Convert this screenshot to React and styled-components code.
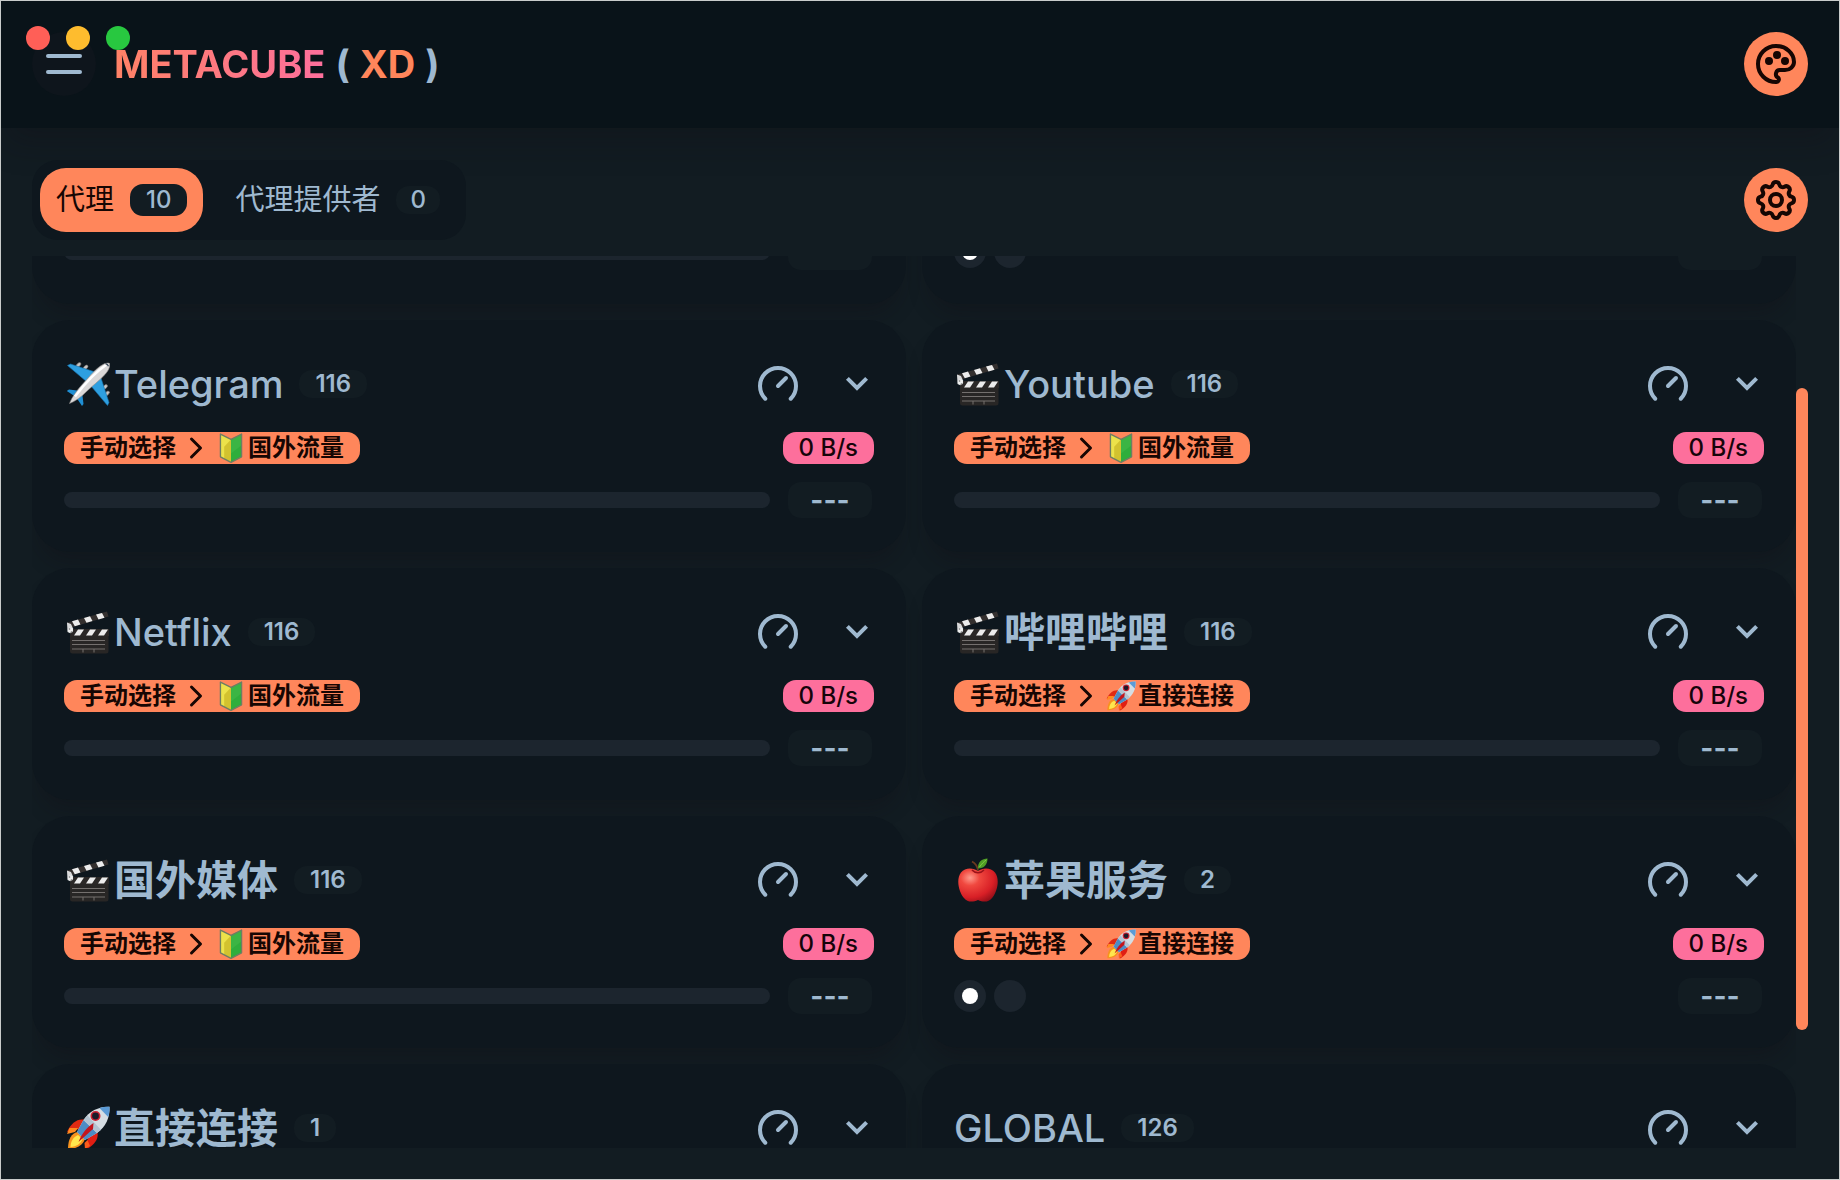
import React, { useLayoutEffect, useRef, useState } from "react";
import styled, { createGlobalStyle, css } from "styled-components";
import {
  TbBrandSpeedtest,
  TbChevronRight,
  TbMenu,
  TbPalette,
  TbSettings,
} from "react-icons/tb";

const base100 = "#121c22";
const base200 = "#0e171e";
const base300 = "#091319";
const neutral = "#1c252e";
const content = "#9fb9d0";
const primary = "#ff865b";
const primaryContent = "#160603";
const secondary = "#fd6f9c";

const GlobalStyle = createGlobalStyle`
  *, *::before, *::after { box-sizing: border-box; }
  body {
    margin: 0;
    background: ${base100};
    color: ${content};
    font-family: Inter, "Noto Sans CJK SC", sans-serif;
  }
  button {
    font: inherit;
    color: inherit;
    border: 0;
    padding: 0;
    cursor: pointer;
  }
  h2 { margin: 0; }
`;

const Window = styled.div`
  display: flex;
  flex-direction: column;
  height: 100vh;
  overflow: hidden;
  outline: 1px solid #c9cccb;
  outline-offset: -1px;
`;

const WindowControls = styled.div`
  position: absolute;
  top: 26px;
  left: 26px;
  display: flex;
  gap: 16px;
`;

const WindowControl = styled.button`
  width: 24px;
  height: 24px;
  border-radius: 50%;
  background: ${(p) => p.$color};
`;

const Header = styled.header`
  display: flex;
  align-items: center;
  gap: 18px;
  padding: 32px;
  background: ${base300};
  box-shadow: 0 20px 30px -6px rgba(16, 14, 20, 0.3);
`;

const RoundButton = styled.button`
  display: grid;
  place-items: center;
  flex: none;
  width: 64px;
  height: 64px;
  border-radius: 50%;
  background: ${(p) => (p.$primary ? primary : "#0e151c")};
  color: ${(p) => (p.$primary ? primaryContent : content)};
`;

const Brand = styled.div`
  display: flex;
  flex: 1;
  gap: 10px;
  font-size: 38px;
  line-height: 56px;
  font-weight: 700;
`;

const BrandLink = styled.a`
  color: transparent;
  background: linear-gradient(to right, #ff865b -20%, #fd6f9c);
  background-clip: text;
  -webkit-background-clip: text;
  text-decoration: none;
`;

const BrandSuffix = styled.span`
  color: ${primary};
`;

const Main = styled.main`
  display: flex;
  flex: 1;
  flex-direction: column;
  gap: 16px;
  min-height: 0;
  padding: 32px;
`;

const Toolbar = styled.div`
  display: flex;
  align-items: center;
  justify-content: space-between;
`;

const Tabs = styled.div`
  display: flex;
  gap: 8px;
  padding: 8px;
  border-radius: 26px;
  background: ${base200};
`;

const Tab = styled.button`
  display: flex;
  align-items: center;
  gap: 16px;
  height: 64px;
  padding: ${(p) => (p.$active ? "0 16px" : "0 18px 0 24px")};
  border-radius: 26px;
  font-size: 29px;
  line-height: 44px;
  background: ${(p) => (p.$active ? primary : "transparent")};
  color: ${(p) => (p.$active ? primaryContent : content)};
`;

const Badge = styled.span`
  display: inline-flex;
  align-items: center;
  justify-content: center;
  flex: none;
  height: 28px;
  padding: 0 14px;
  border-radius: 13px;
  font-size: 24px;
  line-height: 28px;
  font-weight: 500;
  background: ${base100};
  color: ${content};
  ${(p) =>
    p.$tall &&
    css`
      height: 32px;
      padding: 0 16px;
    `}
  ${(p) =>
    p.$tone === "primary" &&
    css`
      gap: 2px;
      font-weight: 600;
      background: ${primary};
      color: ${primaryContent};
    `}
  ${(p) =>
    p.$tone === "secondary" &&
    css`
      background: ${secondary};
      color: #16040a;
    `}
`;

const CountBadge = styled(Badge)`
  padding: 0 16px;
  font-weight: 600;
`;

const Latency = styled(Badge)`
  width: 84px;
  height: 36px;
  font-size: 28px;
  font-weight: 700;
`;

const ScrollArea = styled.div`
  display: flex;
  flex: 1;
  min-height: 0;
`;

const Viewport = styled.div`
  flex: 1;
  min-width: 0;
  overflow-y: auto;
  scrollbar-width: none;
`;

const Track = styled.div`
  flex: none;
  width: 12px;
`;

const Thumb = styled.div`
  border-radius: 6px;
  background: ${primary};
`;

const Grid = styled.div`
  display: grid;
  grid-template-columns: 1fr 1fr;
  gap: 16px;
  padding-bottom: 16px;
`;

const Card = styled.section`
  display: flex;
  flex-direction: column;
  gap: 16px;
  padding: 32px;
  border-radius: 38px;
  background: ${base200};
  box-shadow: 0 16px 20px -6px rgba(16, 14, 20, 0.3);
`;

const Row = styled.div`
  display: flex;
  align-items: center;
  justify-content: space-between;
  min-height: 32px;
`;

const CardHead = styled(Row)`
  height: 64px;
`;

const CardTitle = styled.div`
  display: flex;
  align-items: center;
  gap: 16px;
`;

const Name = styled.h2`
  display: flex;
  align-items: center;
  font-size: ${(p) => (p.$latin ? 38 : 41)}px;
  line-height: 60px;
  font-weight: ${(p) => (p.$latin ? 500 : 600)};
`;

const Emoji = styled.svg`
  flex: none;
  margin: 0 4px 0 2px;
`;

const SmallEmoji = styled(Emoji)`
  margin: 0;
`;

const Actions = styled.div`
  display: flex;
  align-items: center;
  gap: 30px;
`;

const TestButton = styled.button`
  display: grid;
  place-items: center;
  width: 64px;
  height: 64px;
  background: none;
`;

const ToggleButton = styled(TestButton)`
  width: 34px;
`;

const CardFoot = styled(Row)`
  gap: 18px;
  height: 40px;
  padding-right: 2px;
`;

const Bar = styled.div`
  flex: 1;
  height: 16px;
  border-radius: 8px;
  background: ${neutral};
`;

const Nodes = styled.div`
  display: flex;
  flex: 1;
  gap: 8px;
`;

const Node = styled.button`
  display: grid;
  place-items: center;
  width: 32px;
  height: 32px;
  border-radius: 50%;
  background: ${neutral};
  &::before {
    content: "";
    width: 16px;
    height: 16px;
    border-radius: 50%;
    background: ${(p) => (p.$selected ? "#fff" : "transparent")};
  }
`;

const Airplane = () => (
  <g>
    <g fill="#c9c6c4" stroke="#77706e" strokeWidth=".6">
      <ellipse cx="12.5" cy="3" rx="3" ry="1.6" transform="rotate(-45 12.5 3)" />
      <ellipse cx="19.5" cy="5.5" rx="3" ry="1.6" transform="rotate(-45 19.5 5.5)" />
      <ellipse cx="41" cy="31.5" rx="3" ry="1.6" transform="rotate(-45 41 31.5)" />
      <ellipse cx="39" cy="25" rx="3" ry="1.6" transform="rotate(-45 39 25)" />
    </g>
    <path d="M1.500 3.500 4.500 2 29 10 21 20Z" fill="#2e9fe0" stroke="#1672ac" strokeWidth=".6" />
    <path d="M41.500 43.500 43 40.500 35 16 25 24Z" fill="#2e9fe0" stroke="#1672ac" strokeWidth=".6" />
    <path d="M.8 29 3 27.500 15 29 10 35Z" fill="#1f8fd4" />
    <path d="M16 44 17.500 42 16 30 10 35Z" fill="#1f8fd4" />
    <path d="M3.500 41.500C6 35 11 28 18 20.500 24 14 30 6 37 2.500 40 .8 44 .6 43.800 2 44 6 42 9 39 12.500 33 19 26 24 20 30 15 35 9 39.500 3.500 41.500Z" fill="#dad8d8" stroke="#8d8988" strokeWidth=".6" />
    <path d="M9 34.500C17 24 28 11 40 3" stroke="#fff" strokeWidth="2.500" fill="none" />
    <path d="M39.500 1.700c1.400.4 2.400 1.200 3 2.600" stroke="#345" strokeWidth="1.200" fill="none" />
  </g>
);

const Clapper = () => (
  <g>
    <path d="M1.500 12.500 41 1.500 42.500 6.500 5 17.500Z" fill="#34302f" />
    <path d="m6 11.300 6-1.700 2.500 5-5.700 1.700ZM18 8l6-1.700 2.500 4.800-6 1.700ZM30 4.600l6-1.700 2.500 4.800-6 1.800Z" fill="#ececec" />
    <path d="M1 12.500 5 14l3.500 7.500L6 24 1.500 22Z" fill="#d9dadb" />
    <path d="M5 19H43v7H4Z" fill="#2b2827" />
    <path d="m12 19.500h6l-4 6H8ZM24 19.500h6l-4 6h-6ZM36 19.500h6l-4 6h-6Z" fill="#ececec" />
    <path d="M4 26H42.500V41a2.500 2.500 0 0 1-2.500 2.500H6.500A2.500 2.500 0 0 1 4 41Z" fill="#282625" />
    <path d="M6 30.500H39M6 34.500H39M6 39H39M17 39v3.500M28 39v3.500" stroke="#74706e" strokeWidth="1" fill="none" />
    <circle cx="4.5" cy="20" r="2.6" fill="#eeefef" />
    <circle cx="3.5" cy="19" r=".8" fill="#777" />
    <circle cx="5.5" cy="22" r=".8" fill="#777" />
  </g>
);

const Apple = () => (
  <g>
    <defs>
      <radialGradient id="apple-skin" cx=".3" cy=".28" r=".85">
        <stop offset="0" stopColor="#ff9a8c" />
        <stop offset=".28" stopColor="#f0483f" />
        <stop offset=".7" stopColor="#d81f26" />
        <stop offset="1" stopColor="#8d0d17" />
      </radialGradient>
    </defs>
    <path d="M22 13C17 9.500 9 9.500 5 14.500 0 21 2.500 33 7.500 39.500 12 45 17 44 22 42c5 2 10 3 14.500-2.500C41.500 33 44 21 39 14.500 35 9.500 27 9.500 22 13Z" fill="url(#apple-skin)" />
    <path d="M16 12c3 3.500 9 3.500 12 0" stroke="#9c1119" strokeWidth="1.500" fill="none" />
    <path d="M22 13C21.500 8 19 5 16 3.500" stroke="#6b3a1f" strokeWidth="1.800" fill="none" />
    <path d="M22 10.500C21.500 4 26 .5 31.500.5 31.500 6.500 28 10.500 22 10.500Z" fill="#4f9f25" />
    <path d="M23.500 9C25.500 6 28 3.500 30.500 1.700" stroke="#8fd14f" strokeWidth=".8" fill="none" />
  </g>
);

const Rocket = () => (
  <g>
    <path d="M19 14C12 12 5 17 1 26l12-3Z" fill="#e02a13" />
    <path d="M3.500 22 1 28l8-2 3-4Z" fill="#ff8a1f" />
    <path d="M31 25c2.500 7-2 14-11 18.500L22 31Z" fill="#e01e13" />
    <path d="M24 40l-5 3-.5-6 3-3Z" fill="#fb5d1b" />
    <path d="M12 26C5 27 2 34 2 43c9 0 15-4 17-10Z" fill="#f7931e" />
    <path d="M12 29C7 31 4.500 36 4.500 41c6-.5 10-3 12-8Z" fill="#ffe64d" />
    <path d="M43.500.8C33 .5 23 5 17.500 14L11 26l8 8 12-7C40 21 44 11 43.500.8Z" fill="#d5dde3" />
    <path d="M43.500.8c-3.500-.2-7 .3-10 1.300l8.700 9C43.300 7.800 43.700 4.300 43.500.8Z" fill="#5b9bd6" />
    <path d="M17.500 14 11 26l8 8 12-7Z" fill="#4d8cc4" />
    <path d="M17.500 14 31 27l4-3.300L21.500 9.500Z" fill="#b3c4d2" />
    <circle cx="29.5" cy="10" r="5" fill="#cf2233" />
    <circle cx="29.5" cy="10" r="3.4" fill="#1b1b2b" />
    <path d="M27.500 17C20 22 15 29 12.500 36L27 23Z" fill="#c3161d" />
  </g>
);

const Beginner = () => (
  <g strokeLinejoin="round">
    <path d="M22 9.500 6.500 1.500V35L22 43Z" fill="#ece24a" />
    <path d="M22 9.500 12 20V38l10 5Z" fill="#d2c22f" />
    <path d="M22 9.500 37.500 1.500V35L22 43Z" fill="#2fae3c" />
    <path d="M22 9.500 37.500 1.500V18L22 30Z" fill="#45b94a" opacity=".6" />
    <path d="M22 9.500 6.500 1.500V35L22 43 37.500 35V1.500Z" fill="none" stroke="#6e7d63" strokeWidth="2" />
  </g>
);

const drawings = {
  airplane: Airplane,
  clapper: Clapper,
  apple: Apple,
  rocket: Rocket,
  beginner: Beginner,
};

const emojiLabels = {
  airplane: "✈️",
  clapper: "🎬",
  apple: "🍎",
  rocket: "🚀",
  beginner: "🔰",
};

function EmojiIcon({ kind, small }) {
  const Drawing = drawings[kind];
  const Frame = small ? SmallEmoji : Emoji;
  const size = small ? 30 : 44;
  return (
    <Frame width={size} height={size} viewBox="0 0 44 44" role="img" aria-label={emojiLabels[kind]}>
      <Drawing />
    </Frame>
  );
}

const groups = [
  { id: "a" },
  { id: "b", nodes: true },
  { id: "telegram", emoji: "airplane", name: "Telegram", latin: true, count: 116, target: "国外流量", icon: "beginner" },
  { id: "youtube", emoji: "clapper", name: "Youtube", latin: true, count: 116, target: "国外流量", icon: "beginner" },
  { id: "netflix", emoji: "clapper", name: "Netflix", latin: true, count: 116, target: "国外流量", icon: "beginner" },
  { id: "bilibili", emoji: "clapper", name: "哔哩哔哩", count: 116, target: "直接连接", icon: "rocket" },
  { id: "media", emoji: "clapper", name: "国外媒体", count: 116, target: "国外流量", icon: "beginner" },
  { id: "apple", emoji: "apple", name: "苹果服务", count: 2, target: "直接连接", icon: "rocket", nodes: true },
  { id: "direct", emoji: "rocket", name: "直接连接", count: 1 },
  { id: "global", name: "GLOBAL", latin: true, count: 126 },
];

function ProxyGroup({ group }) {
  return (
    <Card>
      <CardHead>
        {group.name && (
          <>
            <CardTitle>
              <Name $latin={group.latin}>
                {group.emoji && <EmojiIcon kind={group.emoji} />}
                <span>{group.name}</span>
              </Name>
              <CountBadge>{group.count}</CountBadge>
            </CardTitle>
            <Actions>
              <TestButton aria-label="测速">
                <TbBrandSpeedtest size={48} />
              </TestButton>
              <ToggleButton aria-label="展开">
                <svg width="24" height="24" viewBox="0 0 24 24" fill="none" stroke="currentColor" strokeWidth="4">
                  <path d="M2.400 6.400 12 16l9.600-9.600" />
                </svg>
              </ToggleButton>
            </Actions>
          </>
        )}
      </CardHead>
      <Row>
        {group.target && (
          <>
            <Badge $tall $tone="primary">
              <span>手动选择</span>
              <TbChevronRight size={36} />
              <EmojiIcon kind={group.icon} small />
              <span>{group.target}</span>
            </Badge>
            <Badge $tall $tone="secondary">
              0 B/s
            </Badge>
          </>
        )}
      </Row>
      <CardFoot>
        {group.nodes ? (
          <Nodes>
            <Node $selected aria-label="节点 1" />
            <Node aria-label="节点 2" />
          </Nodes>
        ) : (
          <Bar />
        )}
        <Latency>{group.target && "---"}</Latency>
      </CardFoot>
    </Card>
  );
}

const initialScroll = 184;

export default function App() {
  const viewport = useRef(null);
  const [thumb, setThumb] = useState({ top: 0, height: 0 });

  const measure = () => {
    const el = viewport.current;
    const ratio = el.clientHeight / el.scrollHeight;
    setThumb({ top: el.scrollTop * ratio, height: el.clientHeight * ratio });
  };

  useLayoutEffect(() => {
    viewport.current.scrollTop = initialScroll;
    measure();
    window.addEventListener("resize", measure);
    return () => window.removeEventListener("resize", measure);
  }, []);

  return (
    <Window>
      <GlobalStyle />
      <Header>
        <RoundButton aria-label="菜单">
          <TbMenu size={48} />
        </RoundButton>
        <Brand>
          <BrandLink href="#">METACUBE</BrandLink>
          <span>(</span>
          <BrandSuffix>XD</BrandSuffix>
          <span>)</span>
        </Brand>
        <RoundButton $primary aria-label="主题">
          <TbPalette size={48} />
        </RoundButton>
      </Header>
      <WindowControls>
        <WindowControl $color="#ff5f57" aria-label="关闭" />
        <WindowControl $color="#febc2e" aria-label="最小化" />
        <WindowControl $color="#28c840" aria-label="最大化" />
      </WindowControls>
      <Main>
        <Toolbar>
          <Tabs>
            <Tab $active>
              <span>代理</span>
              <Badge $tall>10</Badge>
            </Tab>
            <Tab>
              <span>代理提供者</span>
              <Badge>0</Badge>
            </Tab>
          </Tabs>
          <RoundButton $primary aria-label="设置">
            <TbSettings size={48} />
          </RoundButton>
        </Toolbar>
        <ScrollArea>
          <Viewport ref={viewport} onScroll={measure}>
            <Grid>
              {groups.map((group) => (
                <ProxyGroup key={group.id} group={group} />
              ))}
            </Grid>
          </Viewport>
          <Track>
            <Thumb style={{ height: thumb.height, marginTop: thumb.top }} />
          </Track>
        </ScrollArea>
      </Main>
    </Window>
  );
}
